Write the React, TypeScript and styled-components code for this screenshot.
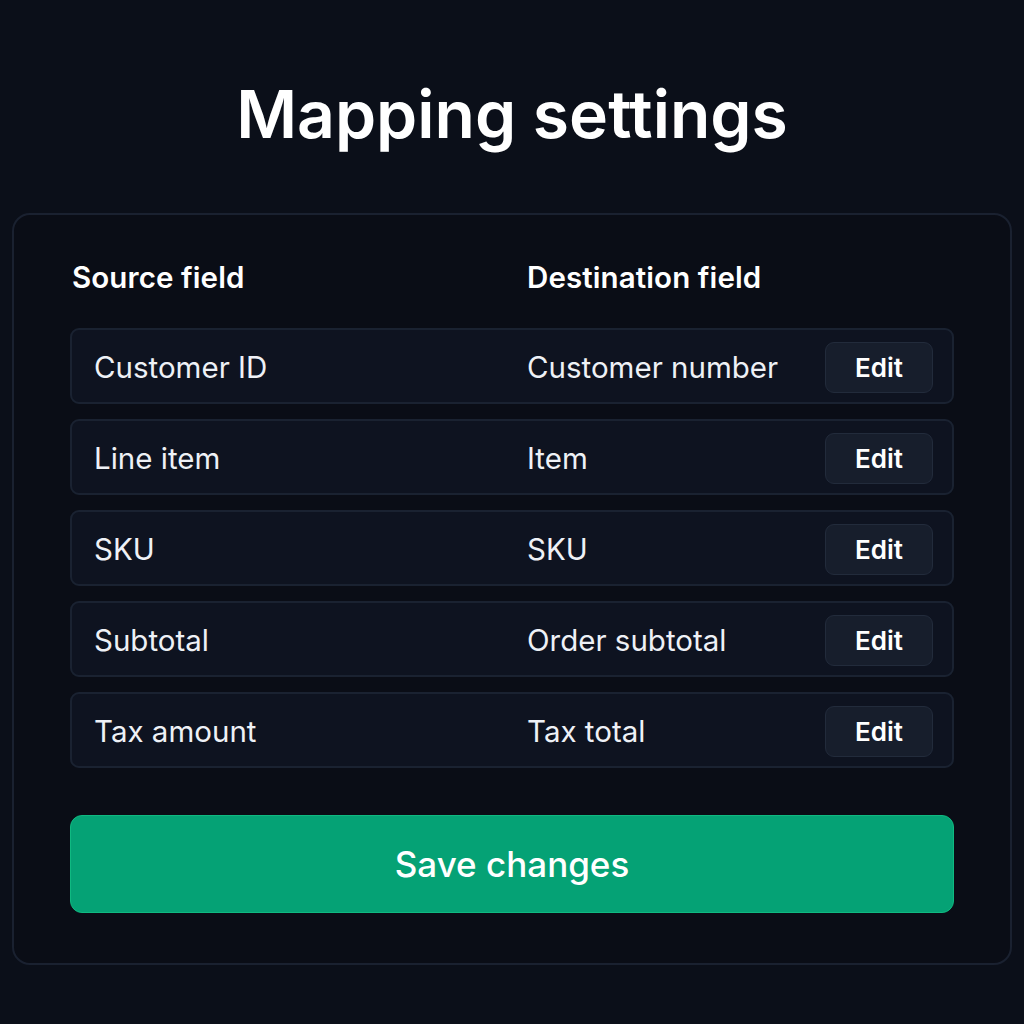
import React from 'react';
import styled, { createGlobalStyle } from 'styled-components';

const GlobalStyle = createGlobalStyle`
  html, body {
    margin: 0;
    padding: 0;
    background: #0b0f19;
  }
  body {
    font-family: Inter, "Noto Sans", sans-serif;
    color: #f4f6fa;
  }
`;

interface IMapping {
    source: string;
    destination: string;
}

const mappings: IMapping[] = [
    {source: 'Customer ID', destination: 'Customer number'},
    {source: 'Line item', destination: 'Item'},
    {source: 'SKU', destination: 'SKU'},
    {source: 'Subtotal', destination: 'Order subtotal'},
    {source: 'Tax amount', destination: 'Tax total'},
];

const Page = styled.div`
    width: 1024px;
    height: 1024px;
    box-sizing: border-box;
    padding: 72px 12px 0;
    display: flex;
    flex-direction: column;
    align-items: stretch;
`;

const Title = styled.h1`
    margin: 0 0 57px;
    height: 84px;
    line-height: 84px;
    text-align: center;
    font-size: 66px;
    font-weight: 600;
    color: #ffffff;
`;

const Card = styled.section`
    box-sizing: border-box;
    height: 752px;
    border: 2px solid #1a2130;
    border-radius: 18px;
    background: #0a0d16;
    padding: 44px 56px 0;
    display: flex;
    flex-direction: column;
`;

const HeaderRow = styled.div`
    display: grid;
    grid-template-columns: 455px 1fr;
    padding-left: 2px;
    height: 36px;
    align-items: center;
    margin-bottom: 33px;
`;

const HeaderCell = styled.div`
    font-size: 29.5px;
    font-weight: 600;
    letter-spacing: 0.1px;
    color: #ffffff;
`;

const List = styled.div`
    display: flex;
    flex-direction: column;
    gap: 15px;
`;

const Row = styled.div`
    box-sizing: border-box;
    height: 76px;
    display: grid;
    grid-template-columns: 433px 1fr auto;
    align-items: center;
    padding: 2px 19px 0 22px;
    border: 2px solid #1a2231;
    border-radius: 9px;
    background: #0e1320;
`;

const Cell = styled.div`
    font-size: 29.5px;
    font-weight: 400;
    color: #eef1f6;
`;

const EditBtn = styled.button`
    box-sizing: border-box;
    width: 108px;
    height: 51px;
    border: 1.5px solid #222b3b;
    border-radius: 9px;
    background: #171e2c;
    color: #ffffff;
    font-family: inherit;
    font-size: 26px;
    font-weight: 600;
    cursor: pointer;
`;

const SaveBtn = styled.button`
    box-sizing: border-box;
    margin-top: 47px;
    height: 98px;
    width: 100%;
    border: 1.5px solid #10b981;
    border-radius: 12px;
    background: #05a275;
    color: #ffffff;
    font-family: inherit;
    font-size: 35px;
    font-weight: 500;
    cursor: pointer;
`;

const App: React.FC = () => {
    return (
        <>
            <GlobalStyle />
            <Page>
                <Title>Mapping settings</Title>
                <Card>
                    <HeaderRow>
                        <HeaderCell>Source field</HeaderCell>
                        <HeaderCell>Destination field</HeaderCell>
                    </HeaderRow>
                    <List>
                        {mappings.map((m) => (
                            <Row key={m.source}>
                                <Cell>{m.source}</Cell>
                                <Cell>{m.destination}</Cell>
                                <EditBtn type={'button'}>Edit</EditBtn>
                            </Row>
                        ))}
                    </List>
                    <SaveBtn type={'button'}>Save changes</SaveBtn>
                </Card>
            </Page>
        </>
    );
};

export default App;
